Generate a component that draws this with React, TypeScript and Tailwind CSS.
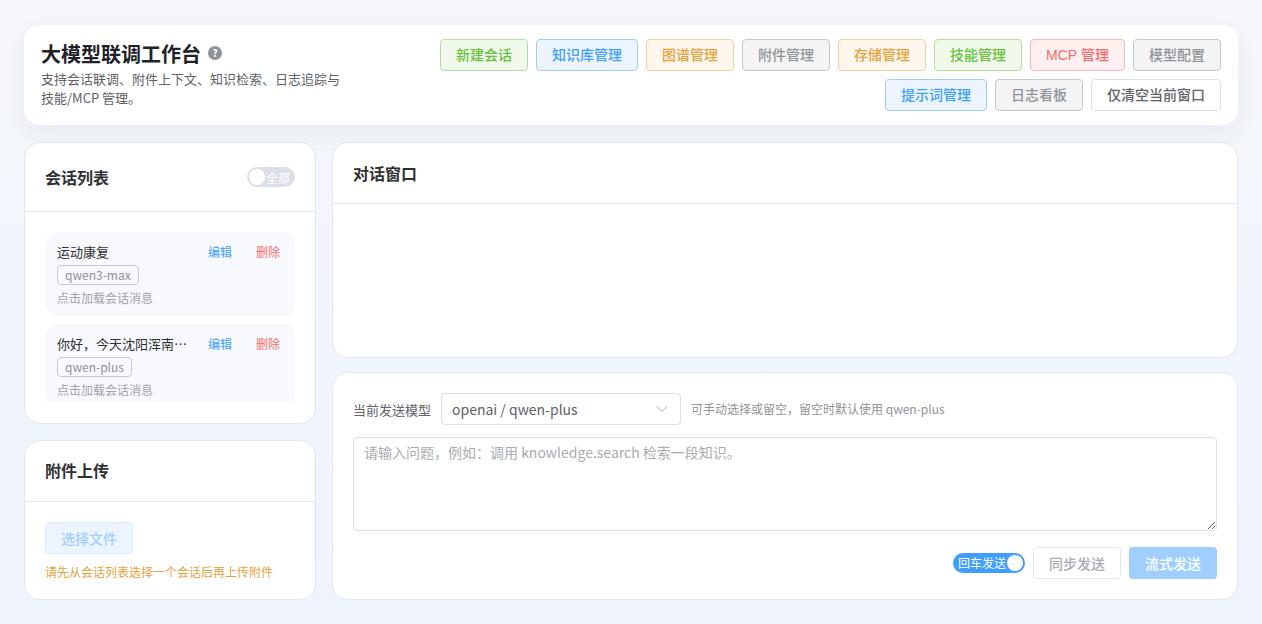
import { ChevronDown } from "lucide-react";

const tones = {
  green: "border-[#b3e19d] bg-[#f0f9eb] text-[#67c23a]",
  blue: "border-[#a0cfff] bg-[#ecf5ff] text-[#409eff]",
  orange: "border-[#f3d19e] bg-[#fdf6ec] text-[#e6a23c]",
  gray: "border-[#c8c9cc] bg-[#f4f4f5] text-[#909399]",
  red: "border-[#fab6b6] bg-[#fef0f0] text-[#f56c6c]",
  plain: "border-[#dcdfe6] bg-white text-[#606266]",
};

function Btn({ tone, children, w }: { tone: keyof typeof tones; children: React.ReactNode; w: string }) {
  return (
    <button className={`flex h-8 items-center justify-center rounded border text-sm font-medium ${tones[tone]} ${w}`}>
      {children}
    </button>
  );
}

function Session({ title, model }: { title: string; model: string }) {
  return (
    <div className="shrink-0 rounded-xl bg-[#f7f9fd] px-3 pt-2 pb-[9px]">
      <div className="flex h-6 items-center">
        <span className="w-[135px] text-[13px] text-[#303133]">{title}</span>
        <span className="ml-4 text-xs text-[#409eff]">编辑</span>
        <span className="ml-6 text-xs text-[#f56c6c]">删除</span>
      </div>
      <div className="mt-[1px] flex">
        <span className="flex h-5 items-center rounded border border-[#c8c9cc] px-[7px] text-xs text-[#909399]">{model}</span>
      </div>
      <p className="mt-1 text-xs leading-[18px] text-[#a0a3a9]">点击加载会话消息</p>
    </div>
  );
}

export default function App() {
  return (
    <div className="h-[624px] overflow-hidden bg-gradient-to-b from-[#f5f7fb] to-[#eef3fe] px-6 pt-[25px] font-['Noto_Sans_CJK_SC','Noto_Sans',sans-serif]">
      {/* header */}
      <header className="flex h-[100px] justify-between rounded-2xl bg-white py-[14px] pr-[17px] pl-[17px] shadow-[0_8px_24px_rgba(31,45,61,0.06)]">
        <div className="w-[310px] pt-[1px]">
          <div className="flex items-center gap-[7px]">
            <h1 className="text-xl leading-7 font-bold text-[#1f2329]">大模型联调工作台</h1>
            <span className="mb-[2px] flex h-[14px] w-[14px] items-center justify-center rounded-full bg-[#909399] text-[10px] leading-none font-bold text-white">?</span>
          </div>
          <p className="mt-[1px] text-[13px] leading-[19px] text-[#606266]">支持会话联调、附件上下文、知识检索、日志追踪与技能/MCP 管理。</p>
        </div>
        <div className="flex flex-col items-end gap-2 font-['Liberation_Sans','Noto_Sans_CJK_SC',sans-serif]">
          <div className="flex gap-2">
            <Btn tone="green" w="w-[88px]">新建会话</Btn>
            <Btn tone="blue" w="w-[102px]">知识库管理</Btn>
            <Btn tone="orange" w="w-[88px]">图谱管理</Btn>
            <Btn tone="gray" w="w-[88px]">附件管理</Btn>
            <Btn tone="orange" w="w-[88px]">存储管理</Btn>
            <Btn tone="green" w="w-[88px]">技能管理</Btn>
            <Btn tone="red" w="w-[95px]"><span className="font-normal">MCP</span>&nbsp;管理</Btn>
            <Btn tone="gray" w="w-[88px]">模型配置</Btn>
          </div>
          <div className="flex gap-2">
            <Btn tone="blue" w="w-[102px]">提示词管理</Btn>
            <Btn tone="gray" w="w-[88px]">日志看板</Btn>
            <Btn tone="plain" w="w-[130px]">仅清空当前窗口</Btn>
          </div>
        </div>
      </header>

      <div className="mt-[17px] grid grid-cols-[292px_906px] gap-4">
        {/* left column */}
        <div className="flex flex-col gap-4">
          <section className="flex h-[282px] flex-col rounded-2xl border border-[#e4e7ed] bg-white">
            <div className="flex h-[69px] items-center justify-between border-b border-[#e4e7ed] pr-5 pl-5">
              <h2 className="text-base font-semibold text-[#303133]">会话列表</h2>
              <div className="flex h-5 w-12 items-center rounded-full bg-[#dcdfe6] pl-[2px]">
                <span className="h-4 w-4 rounded-full bg-white" />
                <span className="mt-[1px] ml-[1px] text-xs leading-none text-white">全部</span>
              </div>
            </div>
            <div className="mx-5 mt-5 flex h-[171px] flex-col gap-2 overflow-hidden">
              <Session title="运动康复" model="qwen3-max" />
              <Session title="你好，今天沈阳浑南…" model="qwen-plus" />
            </div>
          </section>

          <section className="h-[160px] rounded-2xl border border-[#e4e7ed] bg-white">
            <div className="flex h-[61px] items-center border-b border-[#e4e7ed] px-5 pb-[2px]">
              <h2 className="text-base font-semibold text-[#303133]">附件上传</h2>
            </div>
            <div className="px-5 pt-5">
              <button className="flex h-8 w-[88px] items-center justify-center rounded border border-[#d9ecff] bg-[#ecf5ff] text-sm font-medium text-[#a0cfff]">选择文件</button>
              <p className="mt-[9px] text-xs leading-[18px] text-[#e6a23c]">请先从会话列表选择一个会话后再上传附件</p>
            </div>
          </section>
        </div>

        {/* right column */}
        <div className="flex flex-col gap-[14px]">
          <section className="h-[216px] rounded-2xl border border-[#e4e7ed] bg-white">
            <div className="flex h-[61px] items-center border-b border-[#e4e7ed] px-5">
              <h2 className="text-base font-semibold text-[#303133]">对话窗口</h2>
            </div>
          </section>

          <section className="h-[228px] rounded-2xl border border-[#e4e7ed] bg-white px-5 pt-5">
            <div className="flex h-8 items-center">
              <span className="mt-[1px] w-[78px] text-[13px] text-[#606266]">当前发送模型</span>
              <div className="ml-[10px] flex h-8 w-[240px] items-center justify-between rounded border border-[#dcdfe6] pr-2 pl-[10px]">
                <span className="text-sm text-[#606266]">openai / qwen-plus</span>
                <ChevronDown className="h-5 w-5 text-[#a8abb2]" strokeWidth={1.2} />
              </div>
              <span className="ml-[10px] text-xs text-[#909399]">可手动选择或留空，留空时默认使用 qwen-plus</span>
            </div>
            <textarea
              readOnly
              placeholder="请输入问题，例如：调用 knowledge.search 检索一段知识。"
              className="mt-3 block h-[94px] w-full rounded border border-[#dcdfe6] px-[10px] py-[3px] text-sm leading-[22px] placeholder:text-[#a8abb2]"
            />
            <div className="mt-4 flex items-center justify-end">
              <div className="flex h-5 w-[72px] items-center justify-between rounded-full bg-[#409eff] pr-[2px] pl-[5px]">
                <span className="text-xs leading-none text-white">回车发送</span>
                <span className="h-4 w-4 rounded-full bg-white" />
              </div>
              <button className="ml-2 flex h-8 w-[88px] items-center justify-center rounded border border-[#e4e7ed] bg-white text-sm font-medium text-[#a8abb2]">同步发送</button>
              <button className="ml-2 flex h-8 w-[88px] items-center justify-center rounded bg-[#a0cfff] text-sm font-medium text-white">流式发送</button>
            </div>
          </section>
        </div>
      </div>
    </div>
  );
}
